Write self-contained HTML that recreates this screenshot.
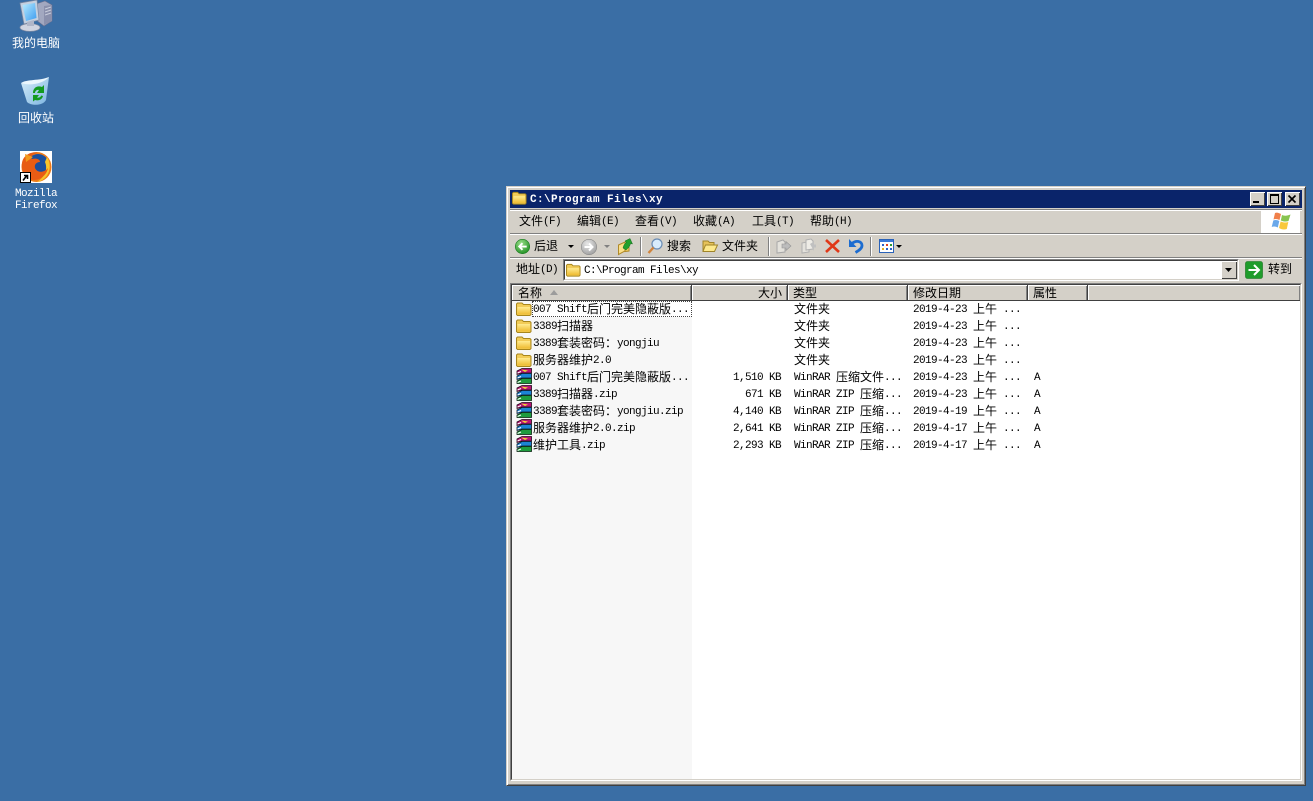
<!DOCTYPE html>
<html><head><meta charset="utf-8"><style>
html,body{margin:0;padding:0}
body{width:1313px;height:801px;background:#3a6ea5;position:relative;overflow:hidden;font:11px "Liberation Mono",monospace;color:#000}
.t{position:absolute;white-space:pre;line-height:14px;height:14px;letter-spacing:-.6px;margin-top:1px}
.t b{font:12px/14px "WenQuanYi Zen Hei","Noto Sans CJK SC",sans-serif;letter-spacing:0;vertical-align:top;position:relative;top:-1px}
.t i{font-style:normal;vertical-align:top}
.a{position:absolute}
.d{color:#fff;text-align:center;width:72px}
.h{position:absolute;top:285px;height:15px;background:#d4d0c8;box-shadow:inset 1px 1px 0 #fff,inset -1px 0 0 #808080;border-right:1px solid #404040}
.s{position:absolute;box-sizing:border-box;border:1px solid;border-color:#808080 #fff #fff #808080;background:#fff}
.s:before{content:"";position:absolute;left:0;top:0;right:0;bottom:0;border:1px solid;border-color:#404040 #d4d0c8 #d4d0c8 #404040}
.w{position:absolute;top:192px;width:15px;height:14px;background:#d4d0c8;box-shadow:inset 1px 1px 0 #fff,inset -1px -1px 0 #404040}
svg{position:absolute;overflow:visible}
</style></head><body>

<svg width="0" height="0" style="position:absolute"><defs>
<linearGradient id="fg" x1="0" y1="0" x2="0" y2="1"><stop offset="0" stop-color="#ffeb90"/><stop offset="1" stop-color="#eeba30"/></linearGradient>
<radialGradient id="gg" cx=".4" cy=".3" r=".8"><stop offset="0" stop-color="#9be08a"/><stop offset="1" stop-color="#16881a"/></radialGradient>
<radialGradient id="gr" cx=".4" cy=".3" r=".8"><stop offset="0" stop-color="#e8e8e8"/><stop offset="1" stop-color="#9a9a9a"/></radialGradient>
<linearGradient id="sc" x1="0" y1="0" x2="1" y2="1"><stop offset="0" stop-color="#b8ecff"/><stop offset="1" stop-color="#3c9cf0"/></linearGradient>
<linearGradient id="rb" x1="0" y1="0" x2="1" y2="1"><stop offset="0" stop-color="#d8eefa"/><stop offset="1" stop-color="#7cb4e0"/></linearGradient>
<symbol id="fo" viewBox="0 0 16 14"><path d="M.5 12.500V2L1.500 1H6L7.500 2.500H14L15 3.500V12.500L14 13.500H1.500Z" fill="#f2cc58" stroke="#a8861c"/><path d="M1.500 5H14V12.500H1.500Z" fill="url(#fg)"/></symbol>
<symbol id="ra" viewBox="0 0 16 16"><path d="M1 3L6 .5H15.500V5H6L1 6.500Z" fill="#b81474" stroke="#200818" stroke-width=".8"/><path d="M5 1.500L12 2.500L9 4Z" fill="#f0d838"/><path d="M1 8L6 5.500H15.500V10H6L1 11.500Z" fill="#1c84d4" stroke="#081828" stroke-width=".8"/><path d="M1 13L6 10.500H15.500V15.500H6L1 15.500Z" fill="#1e9c3e" stroke="#082010" stroke-width=".8"/><path d="M1.500 5L5 3.500M1.500 10L5 8.500M1.500 14.500L5 13" stroke="#fff"/></symbol>
</defs></svg>

<!-- desktop -->
<svg style="left:20px;top:0" width="32" height="32" viewBox="0 0 32 32">
<path d="M16 4L25 1L32 5V21L24 26L16 20Z" fill="#a2a8c0" stroke="#6a7090" stroke-width=".6"/><path d="M24 6V25L32 21V5Z" fill="#8a90ac"/><path d="M25 9L31 7M25 12L31 10M25 15L31 13" stroke="#c8ccdc"/>
<path d="M0 3L17 0L19 20L4 24Z" fill="#c4d0e0" stroke="#7c88a0" stroke-width=".7"/><path d="M2.500 5L15 3L16.500 18L6 21Z" fill="url(#sc)"/>
<ellipse cx="10" cy="27.500" rx="10" ry="3.800" fill="#d0d4e0" stroke="#8a90a4" stroke-width=".7"/><path d="M7 22L14 20V26H7Z" fill="#b0b6c8"/></svg>
<div class="t d" style="left:0;top:36px"><b>我的电脑</b></div>

<svg style="left:21px;top:76px" width="28" height="30" viewBox="0 0 28 30">
<path d="M0 7C8 9 20 7 28 1L25 24C22 30 10 30 6 26Z" fill="url(#rb)"/><path d="M0 7C6 3 18 5 28 1C22 8 8 10 0 7Z" fill="#eaf6fd"/>
<path d="M12 17C12 12 16 9 21 11L23 9V17H16L18 14C16 13.500 14 15 14 17ZM22 20C21 24 17 25 14 24L12 25.500V19H18L16 21.500C18 22 20 21 20 19.500Z" fill="#129a20"/></svg>
<div class="t d" style="left:0;top:111px"><b>回收站</b></div>

<div class="a" style="left:20px;top:151px;width:32px;height:32px;background:#fff"></div>
<svg style="left:20px;top:151px" width="32" height="32" viewBox="0 0 32 32">
<circle cx="16.500" cy="16" r="15" fill="#ee7a18"/><circle cx="18" cy="14" r="11" fill="#1a4f9e"/><path d="M27 6C33 15 29 29 17 31C25 26 28 18 25 11Z" fill="#f7c42a"/><path d="M2 12C3 5 10 0 18 2C12 3 10 6 12 8C16 7 20 8 20 11C17 11 14 13 15 17C17 22 24 22 28 17C26 27 15 32 8 27C3 23 1 17 2 12Z" fill="#e85c14"/><path d="M5 3L13 6L6 11Z" fill="#f29a1c"/></svg>
<div class="a" style="left:20px;top:172px;width:11px;height:11px;background:#000"><svg style="left:1px;top:1px" width="9" height="9" viewBox="0 0 9 9"><rect width="9" height="9" fill="#fff"/><path d="M2 7.500L5.500 3M3 2.500H6.500V6" stroke="#000" stroke-width="1.600" fill="none"/></svg></div>
<div class="t d" style="left:0;top:186px;color:#fff">Mozilla</div>
<div class="t d" style="left:0;top:198px;color:#fff">Firefox</div>

<!-- window -->
<div class="a" style="left:506px;top:186px;width:800px;height:600px;background:#d4d0c8;box-sizing:border-box;border:1px solid;border-color:#d4d0c8 #404040 #404040 #d4d0c8;box-shadow:inset 1px 1px 0 #fff,inset -1px -1px 0 #808080"></div>
<div class="a" style="left:510px;top:190px;width:792px;height:18px;background:#0a246a"></div>
<svg style="left:512px;top:191px" width="15" height="14"><use href="#fo" width="15" height="14"/></svg>
<div class="t" style="left:530px;top:192px;color:#fff;font-weight:bold;letter-spacing:.4px">C:\Program Files\xy</div>

<div class="w" style="left:1250px"><div class="a" style="left:3px;top:9px;width:6px;height:2px;background:#000"></div></div>
<div class="w" style="left:1267px"><div class="a" style="left:3px;top:2px;width:7px;height:7px;border:1px solid #000;border-top-width:2px"></div></div>
<div class="w" style="left:1285px"><svg style="left:3px;top:3px" width="8" height="8"><path d="M0.500 0.500L7.500 7.500M7.500 0.500L0.500 7.500" stroke="#000" stroke-width="1.600"/></svg></div>

<div class="a" style="left:510px;top:209px;width:792px;height:1px;background:#808080"></div>
<div class="a" style="left:510px;top:210px;width:792px;height:1px;background:#fff"></div>

<div class="t" style="left:519px;top:214px"><b>文件</b><i>(F)</i></div>
<div class="t" style="left:577px;top:214px"><b>编辑</b><i>(E)</i></div>
<div class="t" style="left:635px;top:214px"><b>查看</b><i>(V)</i></div>
<div class="t" style="left:693px;top:214px"><b>收藏</b><i>(A)</i></div>
<div class="t" style="left:752px;top:214px"><b>工具</b><i>(T)</i></div>
<div class="t" style="left:810px;top:214px"><b>帮助</b><i>(H)</i></div>

<div class="a" style="left:1261px;top:211px;width:39px;height:22px;background:#fff"></div>
<svg style="left:1271px;top:212px" width="20" height="19" viewBox="0 0 20 19"><path d="M4 1C6 0 8 1 10 2L8.500 8C6.500 7 4.500 6.500 2.500 7.500Z" fill="#f0804a"/><path d="M11 3C13 4 16 4 19.500 2.500L17.500 9C15 10 12 9.500 9.800 8.500Z" fill="#88c450"/><path d="M2.300 8.500C4.500 7.500 6.500 8 8.300 9L6.800 15.500C5 14.500 2.800 14 .7 15Z" fill="#6aa8ea"/><path d="M9.600 9.500C12 10.500 15 11 17.300 10L15.800 17C13 18 10.500 17.500 8 16Z" fill="#f8c83c"/></svg>

<div class="a" style="left:510px;top:233px;width:792px;height:1px;background:#808080"></div>
<div class="a" style="left:510px;top:234px;width:792px;height:1px;background:#fff"></div>

<svg style="left:515px;top:239px" width="15" height="15" viewBox="0 0 16 16"><circle cx="8" cy="8" r="7.700" fill="url(#gg)" stroke="#1a7a20" stroke-width=".6"/><path d="M12.500 8H5M8 4.500L4.500 8L8 11.500" stroke="#fff" stroke-width="2" fill="none"/></svg>
<div class="t" style="left:534px;top:239px"><b>后退</b></div>
<svg style="left:568px;top:245px" width="6" height="3"><path d="M0 0H6L3 3Z"/></svg>
<svg style="left:581px;top:239px" width="16" height="16" viewBox="0 0 16 16"><circle cx="8" cy="8" r="7.700" fill="url(#gr)" stroke="#888" stroke-width=".6"/><path d="M3.500 8H11M8 4.500L11.500 8L8 11.500" stroke="#fff" stroke-width="2" fill="none"/></svg>
<svg style="left:604px;top:245px" width="6" height="3"><path d="M0 0H6L3 3Z" fill="#808080"/></svg>
<svg style="left:618px;top:238px" width="15" height="17" viewBox="0 0 15 17"><path d="M.5 7L7 4V13L.5 16.500Z" fill="#fbe08a" stroke="#b08a28"/><path d="M7 5H11V13L7 13.500Z" fill="#f4d060" stroke="#b08a28"/><path d="M5 10C6 6 7.500 5 8.500 4.500L7 3L12 .5L14.500 6L12.500 5.500C12 8 10.500 10 8 12Z" fill="#22a02c" stroke="#146a1c" stroke-width=".5"/></svg>
<div class="a" style="left:640px;top:237px;width:1px;height:19px;background:#808080;box-shadow:1px 0 0 #fff"></div>
<svg style="left:647px;top:238px" width="16" height="16" viewBox="0 0 16 16"><circle cx="10" cy="6" r="5" fill="#d8ecfc" stroke="#6a8cb4" stroke-width="1.200"/><path d="M6.500 9.500L1.500 15" stroke="#d0843c" stroke-width="2.400"/></svg>
<div class="t" style="left:667px;top:239px"><b>搜索</b></div>
<svg style="left:702px;top:239px" width="16" height="14" viewBox="0 0 16 14"><path d="M1 12V2H6L7.500 3.500H12V6" fill="#e6c25a" stroke="#a08428"/><path d="M1 12.500L3.500 6H15.500L12.500 12.500Z" fill="#fde98c" stroke="#a08428"/></svg>
<div class="t" style="left:722px;top:239px"><b>文件夹</b></div>
<div class="a" style="left:768px;top:237px;width:1px;height:19px;background:#808080;box-shadow:1px 0 0 #fff"></div>
<svg style="left:776px;top:238px" width="16" height="16" viewBox="0 0 16 16"><path d="M1 4L7 2L9 4V14L1 15Z" fill="#e4e2dc" stroke="#a8a8a8"/><path d="M6 6H10V3.500L15 8L10 12.500V10H6Z" fill="#bcbcbc" stroke="#949494" stroke-width=".6"/></svg>
<svg style="left:801px;top:238px" width="16" height="16" viewBox="0 0 16 16"><path d="M1 5L6 4L8 6V14L1 15Z" fill="#e4e2dc" stroke="#b0b0b0"/><path d="M5 2L10 1L12 3V11L5 12Z" fill="#eeece6" stroke="#b0b0b0"/><path d="M9 6L13 3.500V6.500H15V9.500H13V13Z" fill="#c0c0c0"/></svg>
<svg style="left:825px;top:239px" width="15" height="14" viewBox="0 0 15 14"><path d="M1 1L14 13M14 1L1 13" stroke="#e03818" stroke-width="2.600"/></svg>
<svg style="left:848px;top:238px" width="16" height="16" viewBox="0 0 16 16"><path d="M1 1V9H8.500Z" fill="#1c6cd0"/><path d="M4 5.500C8 2 14 3 14 7.500C14 10.500 11 12.500 7.500 14.500" fill="none" stroke="#1c6cd0" stroke-width="2.800"/></svg>
<div class="a" style="left:870px;top:237px;width:1px;height:19px;background:#808080;box-shadow:1px 0 0 #fff"></div>
<svg style="left:879px;top:239px" width="16" height="14" viewBox="0 0 16 14"><rect x=".5" y=".5" width="14" height="13" fill="#fff" stroke="#2a62b8"/><rect x="1" y="1" width="13" height="2" fill="#3a7ad8"/><path d="M3 5h2v2H3z" fill="#2a62c8"/><path d="M7 5h2v2H7z" fill="#e04020"/><path d="M11 5h2v2h-2z" fill="#2a9a30"/><path d="M3 9h2v2H3z" fill="#e8b020"/><path d="M7 9h2v2H7z" fill="#2a62c8"/><path d="M11 9h2v2h-2z" fill="#2a62c8"/></svg>
<svg style="left:896px;top:245px" width="6" height="3"><path d="M0 0H6L3 3Z"/></svg>

<div class="a" style="left:510px;top:257px;width:792px;height:1px;background:#808080"></div>
<div class="a" style="left:510px;top:258px;width:792px;height:1px;background:#fff"></div>

<div class="t" style="left:516px;top:262px"><b>地址</b><i>(D)</i></div>
<div class="s" style="left:563px;top:259px;width:676px;height:22px"></div>
<svg style="left:566px;top:263px" width="15" height="14"><use href="#fo" width="15" height="14"/></svg>
<div class="t" style="left:584px;top:263px">C:\Program Files\xy</div>
<div class="a" style="left:1221px;top:261px;width:16px;height:18px;background:#d4d0c8;box-shadow:inset 1px 1px 0 #fff,inset -1px -1px 0 #404040"><svg style="left:4px;top:7px" width="7" height="4"><path d="M0 0H7L3.500 4Z"/></svg></div>
<svg style="left:1245px;top:261px" width="18" height="18" viewBox="0 0 18 18"><rect x=".5" y=".5" width="17" height="17" rx="2" fill="#1f9c2c" stroke="#14701c" stroke-width=".6"/><path d="M3.500 9H13M9 4L14 9L9 14" stroke="#fff" stroke-width="2" fill="none"/></svg>
<div class="t" style="left:1268px;top:262px"><b>转到</b></div>

<!-- list frame -->
<div class="s" style="left:510px;top:283px;width:792px;height:498px"></div>
<div class="a" style="left:512px;top:285px;width:788px;height:15px;background:#d4d0c8"></div>
<div class="a" style="left:512px;top:300px;width:788px;height:1px;background:#404040"></div>
<div class="h" style="left:512px;width:179px"></div>
<div class="h" style="left:692px;width:95px"></div>
<div class="h" style="left:788px;width:119px"></div>
<div class="h" style="left:908px;width:119px"></div>
<div class="h" style="left:1028px;width:59px"></div>
<div class="h" style="left:1088px;width:212px;border-right:0"></div>
<div class="t" style="left:518px;top:286px"><b>名称</b></div>
<svg style="left:550px;top:290px" width="8" height="5"><path d="M0 5L4 0L8 5Z" fill="#9c9c9c"/></svg>
<div class="t" style="left:758px;top:286px"><b>大小</b></div>
<div class="t" style="left:793px;top:286px"><b>类型</b></div>
<div class="t" style="left:913px;top:286px"><b>修改日期</b></div>
<div class="t" style="left:1033px;top:286px"><b>属性</b></div>

<div class="a" style="left:512px;top:301px;width:180px;height:478px;background:#f7f7f7"></div>
<div class="a" style="left:532px;top:301px;width:160px;height:16px;box-sizing:border-box;border:1px dotted #444;background:#fff"></div>

<!-- rows -->
<svg style="left:516px;top:302px" width="16" height="14"><use href="#fo" width="16" height="14"/></svg>
<svg style="left:516px;top:319px" width="16" height="14"><use href="#fo" width="16" height="14"/></svg>
<svg style="left:516px;top:336px" width="16" height="14"><use href="#fo" width="16" height="14"/></svg>
<svg style="left:516px;top:353px" width="16" height="14"><use href="#fo" width="16" height="14"/></svg>
<svg style="left:516px;top:368px" width="16" height="16"><use href="#ra" width="16" height="16"/></svg>
<svg style="left:516px;top:385px" width="16" height="16"><use href="#ra" width="16" height="16"/></svg>
<svg style="left:516px;top:402px" width="16" height="16"><use href="#ra" width="16" height="16"/></svg>
<svg style="left:516px;top:419px" width="16" height="16"><use href="#ra" width="16" height="16"/></svg>
<svg style="left:516px;top:436px" width="16" height="16"><use href="#ra" width="16" height="16"/></svg>

<div class="t" style="left:533px;top:302px">007 Shift<b>后门完美隐蔽版</b>...</div>
<div class="t" style="left:533px;top:319px">3389<b>扫描器</b></div>
<div class="t" style="left:533px;top:336px">3389<b>套装密码：</b>yongjiu</div>
<div class="t" style="left:533px;top:353px"><b>服务器维护</b>2.0</div>
<div class="t" style="left:533px;top:370px">007 Shift<b>后门完美隐蔽版</b>...</div>
<div class="t" style="left:533px;top:387px">3389<b>扫描器</b>.zip</div>
<div class="t" style="left:533px;top:404px">3389<b>套装密码：</b>yongjiu.zip</div>
<div class="t" style="left:533px;top:421px"><b>服务器维护</b>2.0.zip</div>
<div class="t" style="left:533px;top:438px"><b>维护工具</b>.zip</div>

<div class="t" style="left:733px;top:370px">1,510 KB</div>
<div class="t" style="left:745px;top:387px">671 KB</div>
<div class="t" style="left:733px;top:404px">4,140 KB</div>
<div class="t" style="left:733px;top:421px">2,641 KB</div>
<div class="t" style="left:733px;top:438px">2,293 KB</div>

<div class="t" style="left:794px;top:302px"><b>文件夹</b></div>
<div class="t" style="left:794px;top:319px"><b>文件夹</b></div>
<div class="t" style="left:794px;top:336px"><b>文件夹</b></div>
<div class="t" style="left:794px;top:353px"><b>文件夹</b></div>
<div class="t" style="left:794px;top:370px">WinRAR <b>压缩文件</b>...</div>
<div class="t" style="left:794px;top:387px">WinRAR ZIP <b>压缩</b>...</div>
<div class="t" style="left:794px;top:404px">WinRAR ZIP <b>压缩</b>...</div>
<div class="t" style="left:794px;top:421px">WinRAR ZIP <b>压缩</b>...</div>
<div class="t" style="left:794px;top:438px">WinRAR ZIP <b>压缩</b>...</div>

<div class="t" style="left:913px;top:302px">2019-4-23 <b>上午</b> ...</div>
<div class="t" style="left:913px;top:319px">2019-4-23 <b>上午</b> ...</div>
<div class="t" style="left:913px;top:336px">2019-4-23 <b>上午</b> ...</div>
<div class="t" style="left:913px;top:353px">2019-4-23 <b>上午</b> ...</div>
<div class="t" style="left:913px;top:370px">2019-4-23 <b>上午</b> ...</div>
<div class="t" style="left:913px;top:387px">2019-4-23 <b>上午</b> ...</div>
<div class="t" style="left:913px;top:404px">2019-4-19 <b>上午</b> ...</div>
<div class="t" style="left:913px;top:421px">2019-4-17 <b>上午</b> ...</div>
<div class="t" style="left:913px;top:438px">2019-4-17 <b>上午</b> ...</div>

<div class="t" style="left:1034px;top:370px">A</div>
<div class="t" style="left:1034px;top:387px">A</div>
<div class="t" style="left:1034px;top:404px">A</div>
<div class="t" style="left:1034px;top:421px">A</div>
<div class="t" style="left:1034px;top:438px">A</div>
</body></html>
